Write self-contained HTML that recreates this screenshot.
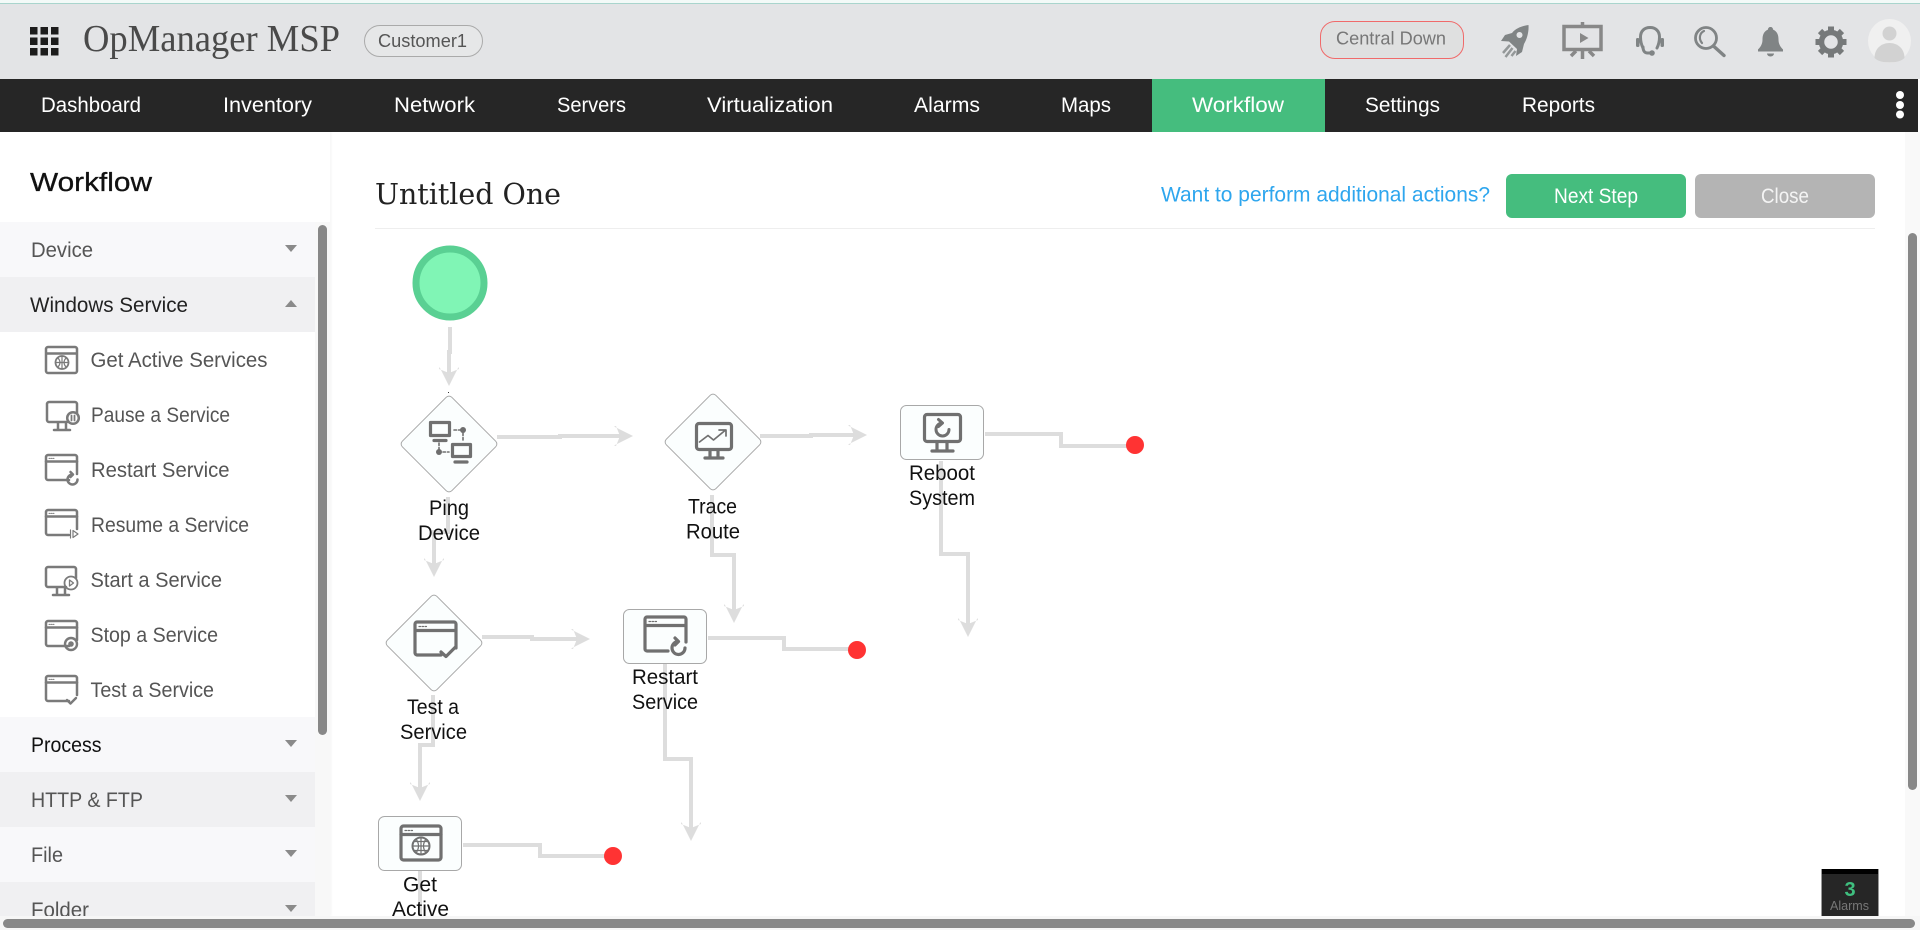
<!DOCTYPE html>
<html lang="en">
<head>
<meta charset="utf-8">
<title>OpManager MSP - Workflow</title>
<style>
html,body{margin:0;padding:0;width:1920px;height:930px;overflow:hidden;background:#fff}
.b{position:absolute}
svg{position:absolute;left:0;top:0}
text{font-family:"Liberation Sans",sans-serif;font-size:20.5px;fill:#555}
.nav{fill:#fff;font-size:21px}
.lab{fill:#111;font-size:21px}
.ln{fill:none;stroke:#ddd;stroke-width:4}
.ah{fill:#ddd}
.box{fill:#fbfefe;stroke:#a8a8a8;stroke-width:1}
.ic{fill:none;stroke:#7a7a7a;stroke-width:2.500;stroke-linejoin:round;stroke-linecap:round}
.ic2{fill:none;stroke:#707070;stroke-width:3.200;stroke-linejoin:round;stroke-linecap:round}
</style>
</head>
<body>
<div class="b" style="left:0;top:0;width:1920px;height:3px;background:#f3faf8"></div>
<div class="b" style="left:0;top:3px;width:1920px;height:1px;background:#a9d5cd"></div>
<div class="b" style="left:0;top:4px;width:1920px;height:75px;background:#e3e4e6"></div>
<div class="b" style="left:0;top:79px;width:1918px;height:53px;background:#262626"></div>
<div class="b" style="left:1152px;top:79px;width:173px;height:53px;background:#45bd7e"></div>

<div class="b" style="left:364px;top:25px;width:117px;height:30px;border:1px solid #aaa;border-radius:16px;background:#e6e7e8"></div>
<div class="b" style="left:1320px;top:21px;width:142px;height:36px;border:1px solid #f06a6a;border-radius:15px;background:#dfe0e0"></div>

<div class="b" style="left:0;top:132px;width:330px;height:784px;background:#fff;box-shadow:1px 0 3px rgba(0,0,0,.05)"></div>
<div class="b" style="left:315px;top:222px;width:15px;height:694px;background:#f8f8f8"></div>
<div class="b" style="left:0;top:222px;width:315px;height:55px;background:#f8f8fa"></div>
<div class="b" style="left:0;top:277px;width:315px;height:55px;background:#f0f0f2"></div>
<div class="b" style="left:0;top:717px;width:315px;height:55px;background:#f8f8fa"></div>
<div class="b" style="left:0;top:772px;width:315px;height:55px;background:#f0f0f2"></div>
<div class="b" style="left:0;top:827px;width:315px;height:55px;background:#f8f8fa"></div>
<div class="b" style="left:0;top:882px;width:315px;height:34px;background:#f0f0f2"></div>
<div class="b" style="left:318px;top:225px;width:9px;height:510px;background:#888;border-radius:5px"></div>

<div class="b" style="left:375px;top:228px;width:1500px;height:1px;background:#eee"></div>
<div class="b" style="left:1506px;top:174px;width:180px;height:44px;background:#45bd7e;border-radius:6px"></div>
<div class="b" style="left:1695px;top:174px;width:180px;height:44px;background:#b4b4b4;border-radius:6px"></div>

<div class="b" style="left:1905px;top:132px;width:15px;height:784px;background:#f9f9f9"></div>
<div class="b" style="left:1908px;top:233px;width:9px;height:557px;background:#888;border-radius:5px"></div>

<svg width="1920" height="930" viewBox="0 0 1920 930">
<defs>
<g id="win"><path d="M24 26H3a2 2 0 0 1-2-2V3a2 2 0 0 1 2-2h27a2 2 0 0 1 2 2v17"/><path d="M1 7.500H32"/><path d="M4 4.400h5" stroke-width="1" stroke-dasharray="1 1"/></g>
<g id="mon"><path d="M21 21H3a2 2 0 0 1-2-2V3a2 2 0 0 1 2-2h26a2 2 0 0 1 2 2v9"/><path d="M12 22v6M20 22v6M8 29h16"/></g>
</defs>

<!-- header -->
<g fill="#1c1c1c">
<rect x="30" y="27" width="7.500" height="7.500"/><rect x="40.500" y="27" width="7.500" height="7.500"/><rect x="51" y="27" width="7.500" height="7.500"/>
<rect x="30" y="37.500" width="7.500" height="7.500"/><rect x="40.500" y="37.500" width="7.500" height="7.500"/><rect x="51" y="37.500" width="7.500" height="7.500"/>
<rect x="30" y="48" width="7.500" height="7.500"/><rect x="40.500" y="48" width="7.500" height="7.500"/><rect x="51" y="48" width="7.500" height="7.500"/>
</g>
<text x="83" y="51" textLength="257" lengthAdjust="spacingAndGlyphs" style="font-family:'Liberation Serif',serif;font-size:38px;fill:#4a4a4a">OpManager MSP</text>
<text x="378" y="47" textLength="89" lengthAdjust="spacingAndGlyphs" style="font-size:18px;fill:#555">Customer1</text>
<text x="1336" y="44.500" textLength="110" lengthAdjust="spacingAndGlyphs" style="font-size:18px;fill:#777">Central Down</text>

<!-- rocket -->
<path fill="#808485" fill-rule="evenodd" d="M1528.500 25C1522 26 1516 28 1512 33L1505 35L1501 41L1509 41.500L1517 49L1516 56L1522 52L1524 44C1527 39 1529 32 1528.500 25ZM1519.500 32a3 3 0 1 0 .01 0Z"/>
<path d="M1510 45l-7 8M1512.500 48l-7 9M1515.500 51l-4 5" fill="none" stroke="#949899" stroke-width="2.500"/>
<!-- presentation -->
<g fill="none" stroke="#888" stroke-width="3.500">
<rect x="1564" y="26.500" width="37" height="23"/>
<path d="M1582.500 22v4M1582.500 50v9M1576 51l-5 5M1589 51l5 5"/>
</g>
<path d="M1580 33l8.500 5-8.500 5z" fill="#888"/>
<!-- headset -->
<g fill="none" stroke="#808485" stroke-width="3" stroke-linecap="round">
<path d="M1643 48c-1.500-3-2.500-6-2.500-11 0-6 4-9.500 9.500-9.500s9.500 3.500 9.500 9.500c0 4-1 8-2.500 11"/>
<path d="M1643 47c0 4 2 6 4.500 6h4.500"/>
</g>
<rect x="1636" y="38" width="3.500" height="9" rx="1.500" fill="#808485"/><rect x="1660.500" y="38" width="3.500" height="9" rx="1.500" fill="#808485"/>
<circle cx="1652" cy="53" r="2.800" fill="#808485"/>
<!-- search -->
<g fill="none" stroke="#808485" stroke-linecap="round">
<circle cx="1706" cy="38" r="10.500" stroke-width="2.800"/>
<path d="M1704 31c-4.500 2-5.500 8-2 12" stroke-width="2.200"/>
<path d="M1714 46.500l10 9" stroke-width="3.400"/>
</g>
<!-- bell -->
<path d="M1770.500 27c-1.500 0-2.500 1-2.500 2.500-4.500 2-5.500 6-5.500 10 0 4-1.500 7-4.500 10v2h25v-2c-3-3-4.500-6-4.500-10 0-4-1-8-5.500-10 0-1.500-1-2.500-2.500-2.500z" fill="#808485"/>
<path d="M1767 53.500h7c0 1.500-1.500 3-3.500 3s-3.500-1.500-3.500-3z" fill="#808485"/>
<!-- gear -->
<g fill="#76797a" transform="translate(1831 42)">
<circle r="9.500" fill="none" stroke="#76797a" stroke-width="5.500"/>
<rect x="-3" y="-15.500" width="6" height="6"/>
<rect x="-3" y="-15.500" width="6" height="6" transform="rotate(45)"/>
<rect x="-3" y="-15.500" width="6" height="6" transform="rotate(90)"/>
<rect x="-3" y="-15.500" width="6" height="6" transform="rotate(135)"/>
<rect x="-3" y="-15.500" width="6" height="6" transform="rotate(180)"/>
<rect x="-3" y="-15.500" width="6" height="6" transform="rotate(225)"/>
<rect x="-3" y="-15.500" width="6" height="6" transform="rotate(270)"/>
<rect x="-3" y="-15.500" width="6" height="6" transform="rotate(315)"/>
</g>
<!-- avatar -->
<ellipse cx="1889.500" cy="41" rx="21.500" ry="22" fill="#f0f0f0"/>
<circle cx="1889.500" cy="33.500" r="7" fill="#d2d2d2"/>
<path d="M1874.500 58c0-9 6.500-15 15-15s15 6 15 15c-3 3-8.500 4.500-15 4.500s-12-1.500-15-4.500z" fill="#d2d2d2"/>

<!-- nav -->
<text class="nav" x="41" y="112" textLength="100" lengthAdjust="spacingAndGlyphs">Dashboard</text>
<text class="nav" x="223" y="112" textLength="89" lengthAdjust="spacingAndGlyphs">Inventory</text>
<text class="nav" x="394" y="112" textLength="81" lengthAdjust="spacingAndGlyphs">Network</text>
<text class="nav" x="557" y="112" textLength="69" lengthAdjust="spacingAndGlyphs">Servers</text>
<text class="nav" x="707" y="112" textLength="126" lengthAdjust="spacingAndGlyphs">Virtualization</text>
<text class="nav" x="914" y="112" textLength="66" lengthAdjust="spacingAndGlyphs">Alarms</text>
<text class="nav" x="1061" y="112" textLength="50" lengthAdjust="spacingAndGlyphs">Maps</text>
<text class="nav" x="1192" y="112" textLength="92" lengthAdjust="spacingAndGlyphs">Workflow</text>
<text class="nav" x="1365" y="112" textLength="75" lengthAdjust="spacingAndGlyphs">Settings</text>
<text class="nav" x="1522" y="112" textLength="73" lengthAdjust="spacingAndGlyphs">Reports</text>
<circle cx="1900" cy="95" r="4" fill="#fff"/><circle cx="1900" cy="105" r="4" fill="#fff"/><circle cx="1900" cy="114.500" r="4" fill="#fff"/>

<!-- sidebar -->
<text x="30" y="191" textLength="122" lengthAdjust="spacingAndGlyphs" style="font-size:25.500px;fill:#111;stroke:#111;stroke-width:.3">Workflow</text>
<g style="font-size:21px">
<text x="31" y="257" textLength="62" lengthAdjust="spacingAndGlyphs" style="font-size:21px">Device</text>
<text x="30" y="312" textLength="158" lengthAdjust="spacingAndGlyphs" style="font-size:21px;fill:#222">Windows Service</text>
<text x="90.500" y="367" textLength="177" lengthAdjust="spacingAndGlyphs" style="font-size:21px">Get Active Services</text>
<text x="91" y="422" textLength="139" lengthAdjust="spacingAndGlyphs" style="font-size:21px">Pause a Service</text>
<text x="91" y="477" textLength="138.500" lengthAdjust="spacingAndGlyphs" style="font-size:21px">Restart Service</text>
<text x="91" y="532" textLength="158" lengthAdjust="spacingAndGlyphs" style="font-size:21px">Resume a Service</text>
<text x="90.500" y="587" textLength="131.500" lengthAdjust="spacingAndGlyphs" style="font-size:21px">Start a Service</text>
<text x="90.500" y="642" textLength="127.500" lengthAdjust="spacingAndGlyphs" style="font-size:21px">Stop a Service</text>
<text x="90.500" y="697" textLength="123.500" lengthAdjust="spacingAndGlyphs" style="font-size:21px">Test a Service</text>
<text x="31" y="752" textLength="70.500" lengthAdjust="spacingAndGlyphs" style="font-size:21px;fill:#111">Process</text>
<text x="31" y="807" textLength="112" lengthAdjust="spacingAndGlyphs" style="font-size:21px">HTTP &amp; FTP</text>
<text x="31" y="862" textLength="32" lengthAdjust="spacingAndGlyphs" style="font-size:21px">File</text>
<text x="31" y="917" textLength="58" lengthAdjust="spacingAndGlyphs" style="font-size:21px">Folder</text>
</g>
<g fill="#8a8a8a">
<path d="M285 245h12l-6 7z"/><path d="M285 307h12l-6-7z"/>
<path d="M285 740h12l-6 7z"/><path d="M285 795h12l-6 7z"/><path d="M285 850h12l-6 7z"/><path d="M285 905h12l-6 7z"/>
</g>
<!-- sidebar icons -->
<g class="ic">
<g transform="translate(45 346)"><path d="M3 1h27a2 2 0 0 1 2 2v22a2 2 0 0 1-2 2H3a2 2 0 0 1-2-2V3a2 2 0 0 1 2-2zM1 7.500H32"/><circle cx="17" cy="16.500" r="6.500" stroke-width="1.800"/><path d="M10.500 16.500h13M17 10v13M13 12q4 4.500 0 9M21 12q-4 4.500 0 9" stroke-width="1.200"/></g>
<g transform="translate(46 401)"><use href="#mon"/><circle cx="27" cy="17" r="5.800" stroke-width="2.500"/><path d="M25.500 14.500v5M28.500 14.500v5" stroke-width="1.800"/></g>
<g transform="translate(45 454)"><use href="#win"/><path d="M32.500 25.500a5 5 0 1 1-5-5M25.500 18l2.500 2.500-2.500 2.500" stroke-width="2.500"/></g>
<g transform="translate(45 509)"><use href="#win"/><path d="M25.500 21v8M28 21.500l5 3.500-5 3.500z" stroke-width="1.200"/></g>
<g transform="translate(45 566)"><use href="#mon"/><circle cx="26" cy="17" r="6.500" stroke-width="1.800"/><path d="M24.500 14l4 3-4 3z" stroke-width="1.300"/></g>
<g transform="translate(45 620)"><use href="#win"/><circle cx="26" cy="24" r="6" stroke-width="2.400"/><circle cx="26" cy="24" r="2.800" fill="#7a7a7a" stroke="none"/></g>
<g transform="translate(45 675)"><use href="#win"/><path d="M22 25l3.500 3.500L31 23" stroke-width="2.400"/></g>
</g>

<!-- main header -->
<text x="375" y="204" textLength="186" lengthAdjust="spacingAndGlyphs" style="font-family:'DejaVu Serif',serif;font-size:28.500px;fill:#222">Untitled One</text>
<text x="1161" y="201.500" textLength="329" lengthAdjust="spacingAndGlyphs" style="font-size:21px;fill:#2ea6ee">Want to perform additional actions?</text>
<text x="1554" y="203" textLength="84" lengthAdjust="spacingAndGlyphs" style="font-size:21px;fill:#fff">Next Step</text>
<text x="1761" y="203" textLength="48" lengthAdjust="spacingAndGlyphs" style="font-size:21px;fill:#f4f4f4">Close</text>

<!-- connector lines -->
<path class="ln" d="M450 327V352H449V378"/>
<path class="ln" d="M497 437H560V436H622"/>
<path class="ln" d="M448 497V532H434V568"/>
<path class="ln" d="M712 495V555H734V614"/>
<path class="ln" d="M760 436H811V435H858"/>
<path class="ln" d="M985 434H1061V446H1130"/>
<path class="ln" d="M941 461V554H968V628"/>
<path class="ln" d="M482 637H532V639H580"/>
<path class="ln" d="M433 695V745H420V792"/>
<path class="ln" d="M708 638H784V649H850"/>
<path class="ln" d="M665 664V759H691V832"/>
<path class="ln" d="M463 845H540V856H606"/>
<path class="ln" d="M420 871V916"/>
<g class="ah">
<polygon points="449,386 458.500,367 459,369 449,373 439,369 439.500,367"/>
<polygon points="633,436 614,426.500 616,426 620,436 616,446 614,445.500"/>
<polygon points="434,577 443.500,558 444,560 434,564 424,560 424.500,558"/>
<polygon points="734,623 743.500,604 744,606 734,610 724,606 724.500,604"/>
<polygon points="867,435 848,425.500 850,425 854,435 850,445 848,444.500"/>
<polygon points="968,637 977.500,618 978,620 968,624 958,620 958.500,618"/>
<polygon points="590,639 571,629.500 573,629 577,639 573,649 571,648.500"/>
<polygon points="420,801 429.500,782 430,784 420,788 410,784 410.500,782"/>
<polygon points="691,841 700.500,822 701,824 691,828 681,824 681.500,822"/>
</g>

<!-- start node -->
<circle cx="450" cy="283" r="34" fill="#80f5b5" stroke="#5ad093" stroke-width="7"/>
<rect x="448" y="392" width="1" height="1" fill="#333"/>

<!-- nodes -->
<rect class="box" x="-35" y="-35" width="70" height="70" rx="4" transform="translate(449 444) rotate(45)"/>
<rect class="box" x="-35" y="-35" width="70" height="70" rx="4" transform="translate(713 442) rotate(45)"/>
<rect class="box" x="-35" y="-35" width="70" height="70" rx="4" transform="translate(434 643) rotate(45)"/>
<rect class="box" x="900.500" y="405.500" width="83" height="54" rx="6"/>
<rect class="box" x="623.500" y="609.500" width="83" height="54" rx="6"/>
<rect class="box" x="378.500" y="816.500" width="83" height="54" rx="6"/>

<!-- ping icon -->
<g class="ic2">
<rect x="430.500" y="422.500" width="19" height="13"/><path d="M434 440.500h12"/>
<rect x="452.500" y="444.500" width="18" height="12"/><path d="M455 462h12"/>
<path d="M454 430h7M463 433v7M439 443v6M443 452h6" stroke-width="1.600" stroke-dasharray="2.500 2"/>
</g>
<circle cx="463" cy="430" r="3" fill="#6e6e6e"/><circle cx="439" cy="452" r="3" fill="#6e6e6e"/>
<!-- trace icon -->
<g class="ic2">
<rect x="696.500" y="423.500" width="35" height="26" rx="2.500"/><path d="M710 451v6M718 451v6M705 458h18"/>
<path d="M699.500 442l8.500-6.500 5.500 4.500 11.500-9.500M719 430h7v6" stroke-width="1.700"/>
</g>
<!-- reboot icon -->
<g class="ic2">
<rect x="924.500" y="414.500" width="36" height="27" rx="2.500"/><path d="M937 443v7M947 443v7M932 451h21"/>
<path d="M949 429.500a6.500 6.500 0 1 1-7-6.500M938.500 419.500l4 3.500-4 3.500" stroke-width="3"/>
</g>
<!-- test icon -->
<g class="ic2" transform="translate(414 621)">
<path d="M27 34H3a2.500 2.500 0 0 1-2-2V3a2 2 0 0 1 2-2h37a2 2 0 0 1 2 2v24M1 9.500H42"/>
<path d="M5 5.500h8" stroke-width="1.200" stroke-dasharray="1.500 1.500"/>
<path d="M27 31l5 4.500 9-9"/>
</g>
<!-- restart icon -->
<g class="ic2" transform="translate(644 616)">
<path d="M24 35H3a2 2 0 0 1-2-2V3a2 2 0 0 1 2-2h37a2 2 0 0 1 2 2v23M1 9.500H42"/>
<path d="M5 5.500h8" stroke-width="1.200" stroke-dasharray="1.500 1.500"/>
<path d="M41 32a6.500 6.500 0 1 1-7-6.500M31 22l3.500 3.500-3.500 3.500"/>
</g>
<!-- get icon -->
<g class="ic2" transform="translate(400 825)">
<rect x="1" y="1" width="40" height="34" rx="2.500"/><path d="M1 9.500H41"/>
<path d="M5 5.500h8" stroke-width="1.200" stroke-dasharray="1.500 1.500"/>
<circle cx="21" cy="21" r="8.500" stroke-width="2"/>
<path d="M12.500 21h17M21 12.500v17M16 14q5 7 0 14M26 14q-5 7 0 14M14 16.500h14M14 25.500h14" stroke-width="1.200"/>
</g>

<!-- labels -->
<text class="lab" x="429" y="515" textLength="40" lengthAdjust="spacingAndGlyphs">Ping</text>
<text class="lab" x="418" y="540" textLength="62" lengthAdjust="spacingAndGlyphs">Device</text>
<text class="lab" x="688" y="513.500" textLength="49" lengthAdjust="spacingAndGlyphs">Trace</text>
<text class="lab" x="686" y="538.500" textLength="54" lengthAdjust="spacingAndGlyphs">Route</text>
<text class="lab" x="909" y="480" textLength="66" lengthAdjust="spacingAndGlyphs">Reboot</text>
<text class="lab" x="909" y="505" textLength="66" lengthAdjust="spacingAndGlyphs">System</text>
<text class="lab" x="407" y="714" textLength="52" lengthAdjust="spacingAndGlyphs">Test a</text>
<text class="lab" x="400" y="739" textLength="67" lengthAdjust="spacingAndGlyphs">Service</text>
<text class="lab" x="632" y="684" textLength="66" lengthAdjust="spacingAndGlyphs">Restart</text>
<text class="lab" x="632" y="709" textLength="66" lengthAdjust="spacingAndGlyphs">Service</text>
<text class="lab" x="403" y="891.500" textLength="34" lengthAdjust="spacingAndGlyphs">Get</text>
<text class="lab" x="392" y="916" textLength="57" lengthAdjust="spacingAndGlyphs">Active</text>

<!-- end nodes -->
<circle cx="1135" cy="445" r="9" fill="#ff3333"/>
<circle cx="857" cy="650" r="9" fill="#ff3333"/>
<circle cx="613" cy="856" r="9" fill="#ff3333"/>

<!-- alarms -->
<rect x="1821" y="869" width="58" height="47" fill="#262626"/>
<rect x="1821" y="869" width="58" height="5" fill="#000"/>
<rect x="1821" y="869" width="1" height="47" fill="#999"/><rect x="1878" y="869" width="1" height="47" fill="#999"/>
<text x="1850" y="896" text-anchor="middle" style="font-size:20px;font-weight:bold;fill:#3fbf7f">3</text>
<text x="1830" y="910" textLength="39" lengthAdjust="spacingAndGlyphs" style="font-size:13px;fill:#777">Alarms</text>
</svg>

<div class="b" style="left:0;top:916px;width:1920px;height:14px;background:#f6f6f6"></div>
<div class="b" style="left:3px;top:919px;width:1912px;height:9px;background:#888;border-radius:5px"></div>
</body>
</html>
